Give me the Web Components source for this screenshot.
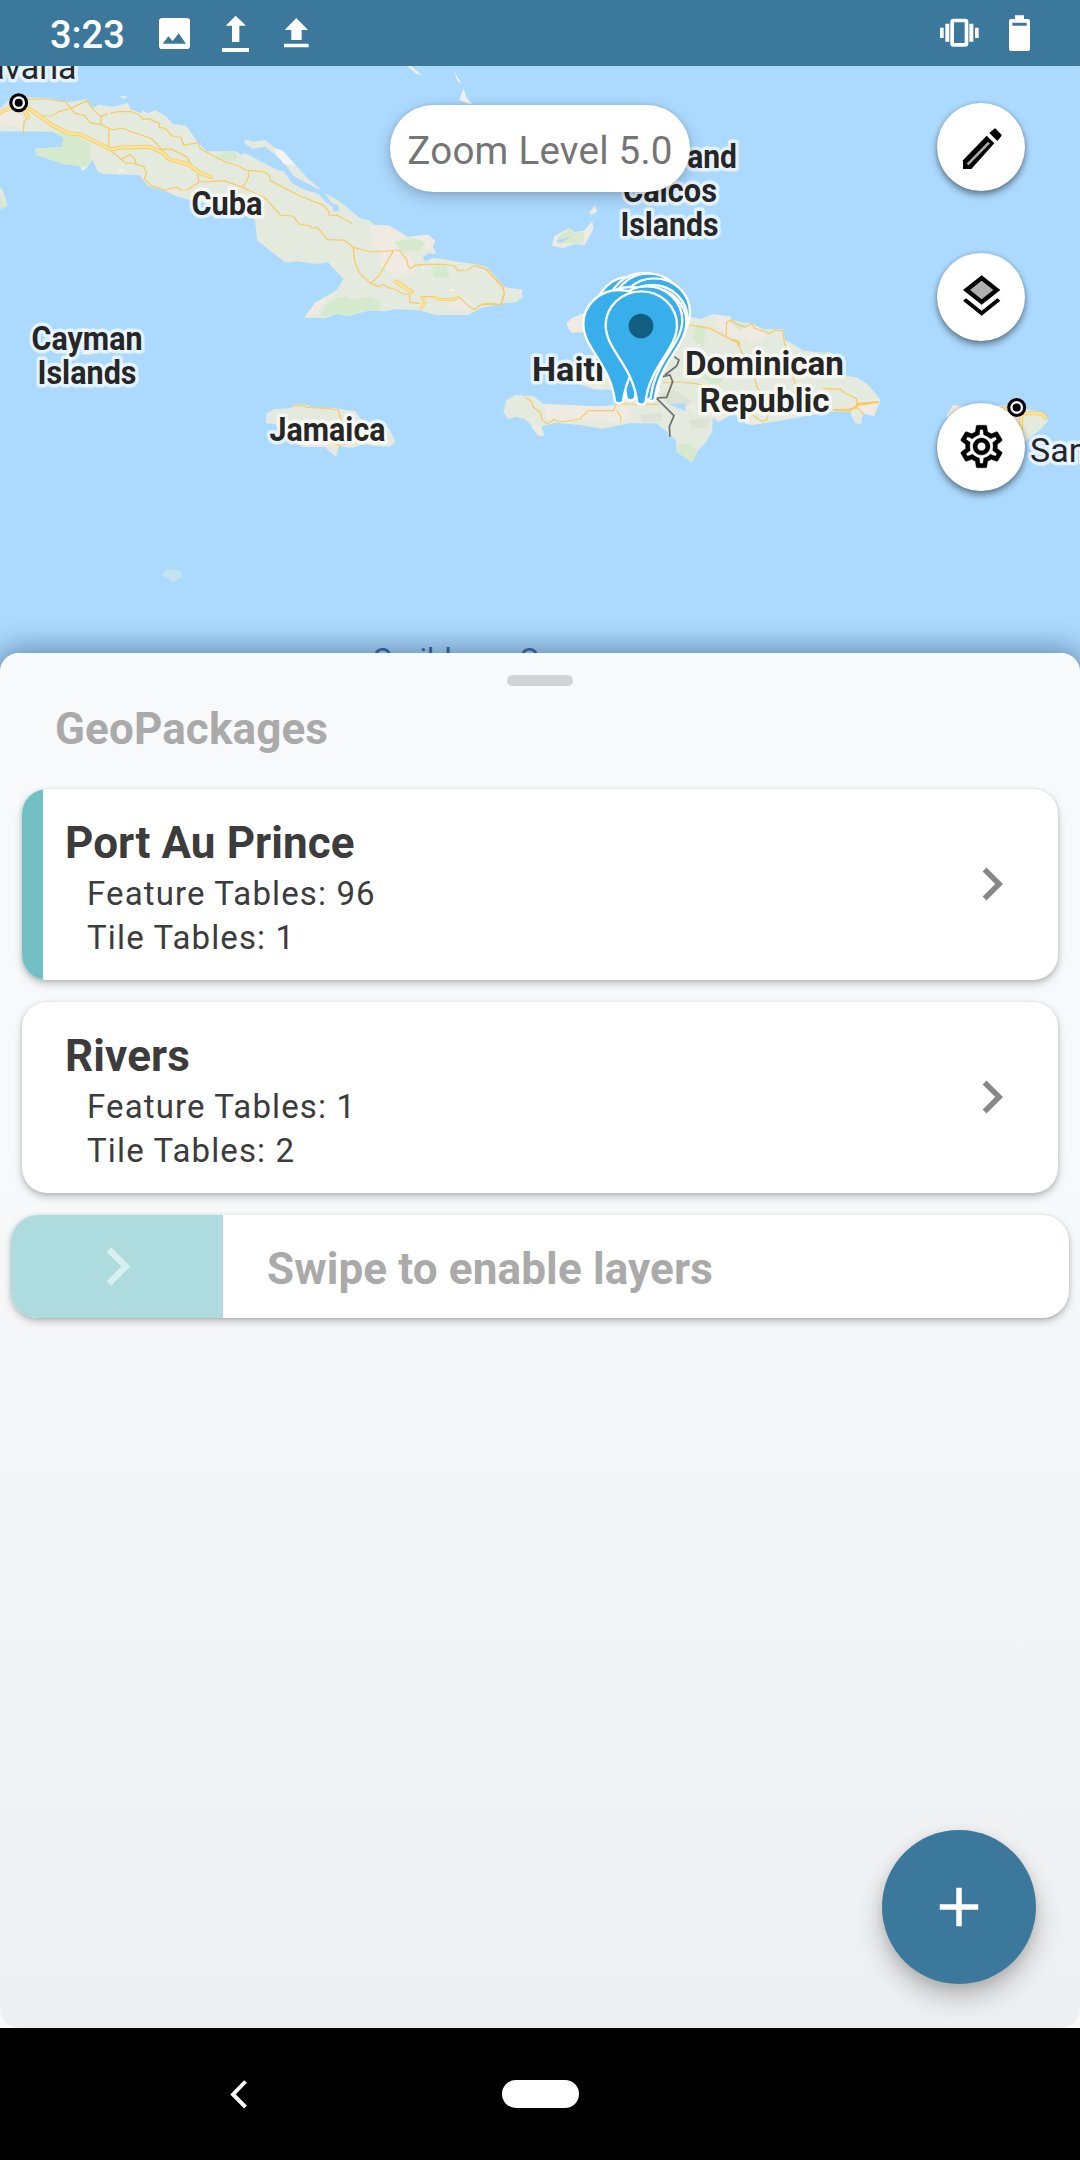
<!DOCTYPE html>
<html lang="en">
<head>
<meta charset="utf-8">
<title>GeoPackage MapCache</title>
<style>
html,body{margin:0;padding:0;background:#000}
body{width:1080px;height:2160px;overflow:hidden;font-family:Roboto,"Noto Sans",sans-serif}
</style>
</head>
<body>
<map-app></map-app>
<script>
const define = (name, html) => customElements.define(name, class extends HTMLElement {
  constructor() {
    super();
    const t = document.createElement('template');
    t.innerHTML = html;
    this.attachShadow({ mode: 'open' }).appendChild(t.content.cloneNode(true));
  }
});

define('status-bar', `
<style>
:host{display:flex;height:66px;flex:none;background:#3c789b;color:#fff;align-items:center;padding:0 50px 0 50px;box-sizing:border-box}
.time{font-size:38px;font-weight:500;line-height:66px;width:109px;letter-spacing:0;padding-top:3px;box-sizing:border-box}
svg{display:block;height:66px;fill:#fff;flex:none}
.left,.right{display:flex}
.left{gap:32px;flex:1}
.left svg:last-child{margin-left:3px}
.right{gap:30px}
</style>
<div class="time">3:23</div>
<div class="left">
<svg width="31" viewBox="477 0 93 198"><path fill-rule="evenodd" d="M487 54h73q10 0 10 10v73q0 10-10 10h-73q-10 0-10-10V64q0-10 10-10zM488 131h70l-22-31-18 23-13-14z"/></svg>
<svg width="27" viewBox="666 0 81 198"><path d="M707 47l31 30h-20v49h-22V77h-19zM666 144h81v12h-81z"/></svg>
<svg width="25" viewBox="852 0 75 198"><path d="M889 54l35 36h-19v30h-31V90h-20zM852 131h74v11h-74z"/></svg>
</div>
<div class="right">
<svg width="39" viewBox="182 0 117 198"><path fill-rule="evenodd" d="M222 56h36q9 0 9 9v66q0 9-9 9h-36q-9 0-9-9V65q0-9 9-9zM224 67v62h32V67zM198 71h12v54h-12zM270 71h12v54h-12zM182 83h11v31h-11zM287 83h11v31h-11z"/></svg>
<svg width="21" viewBox="387 0 63 198"><path fill-rule="evenodd" d="M405 46h27v11h12q6 0 6 6v84q0 6-6 6h-51q-6 0-6-6V63q0-6 6-6h12zM397 68v9h43v-9z"/></svg>
</div>`);

define('zoom-pill', `
<style>
:host{display:flex;align-items:center;justify-content:center;width:300px;height:87px;border-radius:44px;background:#fff;color:#757575;font-size:38.5px;white-space:nowrap;box-shadow:0 5px 16px rgba(0,0,0,.22),0 0 5px rgba(0,0,0,.1)}
span{letter-spacing:.25px;padding-top:3px}
</style><span><slot></slot></span>`);

define('round-button', `
<style>
:host{display:flex;align-items:center;justify-content:center;width:88px;height:88px;border-radius:50%;background:#fff;box-shadow:0 4px 7px rgba(0,0,0,.42),0 0 4px rgba(0,0,0,.16)}
</style><slot></slot>`);

define('map-view', `
<style>
:host{display:block;position:relative;height:620px;flex:none;background:#acdaff;overflow:hidden}
.map{display:block}
.land{fill:#e5eade}.sand{fill:#efeae2}.park{fill:#d5e9cd}.pale{fill:#f3f3f3}.sea{fill:#acdaff}
.road{fill:none;stroke:#f6cb67;stroke-width:3.7;stroke-linejoin:round;stroke-linecap:round}
.hw{fill:none;stroke:#f5cc66;stroke-width:12;stroke-linejoin:round;stroke-linecap:round}
.hw2{fill:none;stroke:#fee498;stroke-width:7;stroke-linejoin:round;stroke-linecap:round}
text{font-family:Roboto,sans-serif;font-size:33px;font-weight:700;fill:#262626;stroke:#fff;stroke-opacity:.68;stroke-width:7px;paint-order:stroke;stroke-linejoin:round}
.city{font-weight:400;font-size:34px}
.water{font-weight:400;font-size:31px;fill:#3c6cb4;stroke:none}
.pin{fill:#38aeea;stroke:#fff;stroke-width:7}
zoom-pill{position:absolute;left:390px;top:39px}
.tools{position:absolute;right:55px;top:36.500px;display:flex;flex-direction:column;gap:62px}
.tools svg{width:51px;height:51px;display:block}
</style>
<svg class="map" width="1080" height="620" viewBox="0 66 1080 620">
<defs>
<path id="pin" class="pin" d="M0-105C60-105 107-58 107-3C107 70 24 118 12 230Q0 240-12 230C-24 118-107 70-107-3C-107-58-60-105 0-105Z"/>
<g id="cap"><circle r="9.5"/><circle r="6.4" fill="#f4f4f4"/><circle r="4"/></g>
</defs>
<g transform="translate(0 60) scale(.34439 .33333)">
<path class="land" d="M0 146L28 118L84 112L150 116L200 126L252 118L270 143L287 134L330 140L372 128L380 148L408 160L415 152L430 160L450 150L480 168L503 192L541 198L560 225L575 248L600 274L686 274L700 285L712 280L760 305L800 328L825 335L848 370L880 388L925 402L945 425L965 440L970 455L985 452L984 438L962 428L945 400L985 424L1010 445L1045 474L1075 482L1085 494L1130 496L1185 530L1245 524L1264 542L1257 560L1268 583L1245 580L1228 590L1235 605L1255 594L1290 598L1345 608L1380 612L1415 622L1465 682L1515 688L1518 710L1500 727L1460 730L1395 745L1360 765L1265 765L1215 750L1140 748L1120 754L1070 752L1010 768L975 762L948 774L883 773L915 728L978 690L997 656L970 628L952 606L920 612L862 604L830 608L747 542L740 478L650 440L560 422L515 410L480 393L430 378L405 345L300 342L284 334L268 300L255 318L240 332L230 318L185 312L105 284L102 266L180 260L185 235L155 215L0 214Z"/>
<path class="land" d="M710 238L735 245L770 240L800 265L850 305L893 355L935 392L880 364L855 350L825 310L800 285L770 260L735 267L710 250ZM345 109L371 108L362 117ZM0 380L10 395L21 438L0 448Z"/>
<path class="pale" d="M797 264L822 272L860 318L848 316L825 312L804 286ZM884 356L935 392L905 372ZM1183 18L1194 18L1226 48L1207 40ZM1319 36L1342 74L1328 62ZM1346 85L1354 112L1372 134L1334 121ZM345 326L370 332L345 335ZM1240 548L1248 560L1232 568ZM235 328L255 318L245 330ZM1226 620L1240 624L1226 628ZM1306 686L1326 692L1310 695Z"/>
<path class="sand" d="M0 165L25 150L70 165L64 200L20 196L0 190ZM1075 496L1125 498L1175 530L1145 545L1160 570L1200 600L1205 640L1150 655L1100 610L1110 575L1080 555ZM1190 530L1245 524L1262 545L1250 570L1225 550ZM1300 735L1345 712L1380 735L1355 755ZM888 770L915 728L960 705L920 760Z"/>
<path class="park" d="M102 266L180 260L185 235L160 218L200 216L262 252L264 296L250 322L230 318L185 312L105 284ZM624 298L650 275L686 276L690 292L680 304ZM930 768L945 735L985 712L1010 710L1022 720L1070 710L1104 725L1102 750L1060 752L1010 766L975 762ZM1255 620L1295 618L1307 652L1260 652ZM1145 545L1200 535L1235 545L1220 570L1165 572ZM0 400L18 440L0 448Z"/>
<path class="road" d="M76 118L130 117L190 125L206 145L252 122L270 148L293 170L293 194L328 210L352 204L440 236L470 268L500 268L545 292L552 310M293 170L312 161M320 160L345 154L380 155L405 165L415 178L430 176L464 190L462 202L480 205L500 228L525 232L534 256L575 248L582 266L650 304L692 318L712 330L765 335L782 345L785 362L865 405L940 436L955 455L955 465L982 467L1020 489M206 145L218 160L245 167L262 188L293 194M206 145L170 155L148 168L120 168M316 208L316 262L322 272L352 298L378 284L392 298L395 312L418 320L425 340L420 355L438 376L478 390L515 381L525 390L545 390L578 366L605 365L650 362L705 382L770 414L815 466L852 468L868 492L900 498L906 504L922 503L950 538L1000 541L1026 562L1078 576L1143 572L1100 648L1076 670L1045 640L1030 605L1026 562M352 298L362 308L395 312M578 366L574 344M722 330L722 350L705 382M1076 670L1100 680L1115 674L1125 682L1143 687M1148 688L1170 702L1190 703L1190 727L1218 730M1148 570L1160 572L1182 600L1184 617L1192 626L1205 616L1235 613L1290 613L1320 618L1328 632L1358 630L1378 616L1412 627L1460 680L1465 700L1455 735L1430 730L1400 732L1378 748L1365 742L1335 712M1230 710L1260 710M68 215L70 185L78 172"/>
<path class="hw" d="M0 158L50 132M80 142L150 195L200 220L235 224L322 268L350 263L430 260L470 276L492 298L545 312L580 338L612 351M1150 665L1195 695M70 150L82 172"/>
<path class="hw2" d="M0 158L50 132M80 142L150 195L200 220L235 224L322 268L350 263L430 260L470 276L492 298L545 312L580 338L612 351M1150 665L1195 695M70 150L82 172"/>
<path class="hw" style="stroke-width:9" d="M1262 712L1275 718L1315 719L1330 712M1225 712L1235 726L1222 745"/>
<path class="hw2" style="stroke-width:5" d="M1262 712L1275 718L1315 719L1330 712M1225 712L1235 726L1222 745"/>
</g>
<g transform="translate(480 60) scale(.33333)">
<path class="sand" d="M216 557L223 528L268 504L285 516L312 512L337 484L340 507L314 555L285 552L250 564ZM330 455L344 437L353 455L332 465Z"/>
<path class="park" d="M232 530L268 506L284 518L312 515L310 550L232 550Z"/><path class="sea" d="M230 541L275 530L238 550Z"/>
</g>
<g transform="translate(480 260) scale(.33333)">
<path class="land" d="M260 190L275 175L310 160L420 140L600 172L632 170L660 178L700 162L740 168L755 180L790 188L815 190L850 208L910 208L915 240L935 250L970 272L1040 280L1080 345L1130 352L1165 375L1202 420L1183 468L1150 460L1143 492L1125 490L1110 455L1050 455L900 482L860 488L815 494L780 475L760 460L715 485L698 472L697 515L675 550L655 570L635 607L590 575L588 540L560 515L530 490L450 490L365 506L300 495L225 488L183 500L195 527L175 527L168 508L135 478L110 470L85 478L70 455L80 420L105 405L160 408L190 432L270 435L345 440L400 435L425 428L400 390L340 388L270 362L280 340L390 340L340 215L275 218L265 205Z"/>
<path class="sand" d="M260 190L275 175L320 158L330 214L275 218L265 205ZM190 433L320 438L440 440L470 470L410 488L340 476L230 485L200 480ZM270 363L380 380L365 390ZM700 170L750 168L755 190L850 212L860 230L820 250L780 230L730 220ZM700 455L760 460L715 485ZM800 480L860 488L815 494L795 492ZM1110 430L1195 415L1180 468L1150 460L1120 450ZM620 440L640 430L655 460ZM150 495L180 505L190 525L175 527Z"/>
<path class="park" d="M590 575L592 555L625 550L655 570L635 607ZM665 350L710 330L730 365L690 375ZM1010 280L1050 275L1080 300L1020 300ZM750 185L800 195L780 212ZM650 190L680 200L670 260L640 240Z"/>
<path fill="#dce2d4" d="M480 465L548 458L545 482L485 487ZM540 400L580 390L635 420L625 430L560 430ZM630 480L690 475L685 505L635 505Z"/>
<path class="sea" d="M564 432L620 430L614 445L622 455Z"/>
<path class="road" d="M0 22L18 27L66 80L73 100L62 132L0 135M135 412L155 424L160 442L182 458L186 480L203 492L222 478L240 486L300 477L325 452L400 452L410 430L440 432L535 433M410 450L422 470L422 483M600 190L690 205L740 232L770 245L790 285L800 310L815 310L830 380L840 395M738 230L740 186L752 182L795 202L815 190L825 205L870 220L885 210L908 212L912 240L925 300L945 370L940 400M550 368L600 366L640 370L690 378M1030 385L1080 388L1100 402L1130 415L1130 445L1060 450M1130 430L1195 425M1130 440L1150 462M810 460L845 484L860 480L870 450"/>
<path fill="none" stroke="#f6cb67" stroke-width="6" d="M755 240L775 245L778 256M1060 450L1110 452L1132 435L1195 426"/>
<path fill="none" stroke="#6e6e6e" stroke-width="5" d="M583 290L597 300L590 318L555 345M530 414L560 412L578 365L570 345L548 350M530 415L582 467L568 500L570 530"/>
</g>
<g transform="translate(0 300) scale(.34439 .33333)">
<path class="land" d="M773 342L795 327L845 325L850 314L885 313L900 320L975 325L1032 334L1050 360L1130 385L1148 425L1132 440L1085 438L1060 432L1022 444L985 438L976 470L942 440L880 440L850 425L815 400L800 372L773 370ZM225 162L262 152L280 158L262 165Z"/>
<path class="sand" d="M860 425L940 425L1020 440L985 438L942 440L880 440Z"/>
<path class="road" d="M848 318L885 316L890 322L950 325L982 330L992 365L985 390M950 425L985 436L1020 428"/>
<path fill="#c5e3ee" d="M471 824L485 806L528 814L528 832L502 846Z"/>
</g>
<g transform="translate(880 0) scale(.33333)">
<path class="land" d="M200 1245L220 1215L250 1220L370 1215L445 1228L480 1236L505 1262L480 1290L435 1325L300 1325L210 1300ZM0 1195L3 1198L0 1202Z"/><path class="sand" d="M198 1250L220 1215L245 1218L220 1240Z"/>
<path class="hw" d="M370 1224L400 1232L430 1240L485 1240L496 1252M425 1245L422 1290"/><path class="hw2" d="M370 1224L400 1232L430 1240L485 1240L496 1252M425 1245L422 1290"/>
</g>
<text class="city" x="76.500" y="79" text-anchor="end">Havana</text>
<text x="191.500" y="215" textLength="71" lengthAdjust="spacingAndGlyphs">Cuba</text>
<text x="31.500" y="349.500" textLength="111" lengthAdjust="spacingAndGlyphs">Cayman</text>
<text x="37.500" y="383.500" textLength="99" lengthAdjust="spacingAndGlyphs">Islands</text>
<text x="269.500" y="441" textLength="116" lengthAdjust="spacingAndGlyphs">Jamaica</text>
<text x="532" y="380.500" textLength="72" lengthAdjust="spacingAndGlyphs">Haiti</text>
<text x="685" y="375" textLength="159" lengthAdjust="spacingAndGlyphs">Dominican</text>
<text x="699.500" y="411.700" textLength="130" lengthAdjust="spacingAndGlyphs">Republic</text>
<text x="603" y="168" textLength="134" lengthAdjust="spacingAndGlyphs">Turks and</text>
<text x="623" y="202" textLength="94" lengthAdjust="spacingAndGlyphs">Caicos</text>
<text x="620.500" y="236" textLength="98" lengthAdjust="spacingAndGlyphs">Islands</text>
<text class="city" x="1030" y="461.500">San Juan</text>
<text class="water" x="372" y="669.500">Caribbean Sea</text>
<use href="#cap" x="18.700" y="102.700"/><use href="#cap" x="1016.700" y="407.500"/>
<g transform="translate(480 260) scale(.33333)">
<use href="#pin" x="455" y="154"/><use href="#pin" x="492" y="144"/><use href="#pin" x="505" y="146"/><use href="#pin" x="523" y="160"/><use href="#pin" x="452" y="186"/><use href="#pin" x="516" y="180"/><use href="#pin" x="512" y="189"/><use href="#pin" x="500" y="184"/><use href="#pin" x="417" y="195"/><use href="#pin" x="484" y="199"/>
<circle cx="483" cy="198" r="37" fill="#125e82"/>
</g>
</svg>
<zoom-pill>Zoom Level 5.0</zoom-pill>
<div class="tools">
<round-button><svg viewBox="226 363 153 153"><path d="M318 407L341 430L272 507H247V481Z"/><path stroke="#aaa" stroke-width="8" d="M261 493L325 428"/><path stroke="#000" stroke-width="4" stroke-linejoin="round" d="M343 387L361 406L350 420L329 399Z"/></svg></round-button>
<round-button><svg viewBox="226 813 153 153"><path d="M303 826L359 870L303 914L247 870Z"/><path fill="#b0b0b0" d="M303 842L338 870L303 898L268 870Z"/><path d="M247 902L256 895L303 932L350 895L359 902L303 947Z"/></svg></round-button>
<round-button><svg viewBox="0 0 24 24"><path stroke="#000" stroke-width=".2" d="M19.430 12.980c.04-.32.07-.64.07-.98 0-.34-.03-.66-.07-.98l2.110-1.650c.19-.15.24-.42.12-.64l-2-3.460c-.09-.16-.26-.25-.44-.25-.06 0-.12.01-.17.03l-2.490 1c-.52-.4-1.080-.73-1.690-.98l-.38-2.650C14.460 2.180 14.250 2 14 2h-4c-.25 0-.46.18-.49.42l-.38 2.650c-.61.25-1.170.59-1.690.98l-2.490-1c-.06-.02-.12-.03-.18-.03-.17 0-.34.09-.43.25l-2 3.460c-.13.22-.07.49.12.64l2.110 1.650c-.04.32-.07.65-.07.98 0 .33.03.66.07.98l-2.110 1.650c-.19.15-.24.42-.12.64l2 3.460c.09.16.26.25.44.25.06 0 .12-.01.17-.03l2.490-1c.52.4 1.080.73 1.690.98l.38 2.650c.03.24.24.42.49.42h4c.25 0 .46-.18.49-.42l.38-2.650c.61-.25 1.170-.59 1.690-.98l2.490 1c.06.02.12.03.18.03.17 0 .34-.09.43-.25l2-3.460c.12-.22.07-.49-.12-.64l-2.110-1.650zm-1.980-1.710c.04.31.05.52.05.73 0 .21-.02.43-.05.73l-.14 1.130.89.7 1.080.84-.7 1.210-1.270-.51-1.040-.42-.9.68c-.43.32-.84.56-1.250.73l-1.060.43-.16 1.130-.2 1.350h-1.400l-.19-1.350-.16-1.130-1.060-.43c-.43-.18-.83-.41-1.230-.71l-.91-.7-1.060.43-1.270.51-.7-1.210 1.080-.84.89-.7-.14-1.130c-.03-.31-.05-.54-.05-.74s.02-.43.05-.73l.14-1.130-.89-.7-1.080-.84.7-1.210 1.270.51 1.040.42.9-.68c.43-.32.84-.56 1.250-.73l1.060-.43.16-1.130.2-1.350h1.390l.19 1.350.16 1.130 1.060.43c.43.18.83.41 1.230.71l.91.7 1.060-.43 1.270-.51.7 1.210-1.070.85-.89.7.14 1.130zM12 8c-2.210 0-4 1.790-4 4s1.790 4 4 4 4-1.790 4-4-1.790-4-4-4zm0 6c-1.100 0-2-.9-2-2s.9-2 2-2 2 .9 2 2-.9 2-2 2z"/></svg></round-button>
</div>`);

define('geo-card', `
<style>
:host{display:flex;align-items:stretch;height:191px;margin:0 22px;border-radius:25px;background:#fff;color:#3c3c3c;overflow:hidden;box-shadow:0 4px 8px rgba(0,0,0,.2),0 1px 4px rgba(0,0,0,.14)}
.stripe{width:21px;flex:none}
:host([active]) .stripe{background:#73c0c4}
.body{flex:1;padding:28px 0 0 22px}
.title{font-size:44px;font-weight:700;line-height:52px;letter-spacing:.1px;white-space:nowrap;margin-bottom:3px}
.info{font-size:33px;line-height:44px;letter-spacing:1.130px;padding-left:22px;white-space:nowrap}
svg{width:66px;height:66px;margin:62px 33px 0 0;fill:#888}
</style>
<div class="stripe"></div>
<div class="body"><div class="title"><slot></slot></div><div class="info"><slot name="features"></slot></div><div class="info"><slot name="tiles"></slot></div></div>
<svg viewBox="0 0 24 24"><path d="M10 6L8.590 7.410 13.170 12l-4.580 4.590L10 18l6-6z"/></svg>`);

define('swipe-row', `
<style>
:host{display:flex;height:103px;margin:0 11px;border-radius:27px;background:#fff;overflow:hidden;box-shadow:0 4px 8px rgba(0,0,0,.2),0 1px 4px rgba(0,0,0,.14)}
.thumb{width:212px;background:#aedbde;display:flex;align-items:center;justify-content:center}
svg{width:77px;height:77px;fill:#daeff0}
.label{font-size:44px;font-weight:700;color:#aaa;padding-left:44px;line-height:108px;letter-spacing:.14px;white-space:nowrap}
</style>
<div class="thumb"><svg viewBox="0 0 24 24"><path d="M10 6L8.590 7.410 13.170 12l-4.580 4.590L10 18l6-6z"/></svg></div>
<div class="label"><slot></slot></div>`);

define('add-button', `
<style>
:host{display:flex;align-items:center;justify-content:center;width:154px;height:154px;border-radius:50%;background:#3c789b;box-shadow:0 14px 26px rgba(0,0,0,.22),0 4px 12px rgba(0,0,0,.1)}
svg{width:66px;height:66px;fill:#fff}
</style><svg viewBox="0 0 24 24"><path d="M19 13h-6v6h-2v-6H5v-2h6V5h2v6h6v2z"/></svg>`);

define('bottom-sheet', `
<style>
:host{display:block;position:relative;height:1375px;margin-top:-33px;flex:none;border-radius:19px 19px 0 0;overflow:visible;background:#fafafa;box-shadow:0 0 28px 6px rgba(0,20,50,.38)}
.panel{display:flex;flex-direction:column;height:100%;box-sizing:border-box;border-radius:19px;background:linear-gradient(#f8f9fb 0%,#f8f9fb 35%,#eeeff1 100%)}
.handle{width:66px;height:11px;border-radius:6px;background:#d3d3d3;margin:22px auto 0;flex:none}
h1{margin:15px 0 0 55px;font-size:44px;line-height:56px;height:88px;color:#aaa;font-weight:700;letter-spacing:.12px}
.list{display:flex;flex-direction:column;gap:22px}
.foot{flex:1;display:flex;justify-content:flex-end;align-items:flex-end;padding:0 44px 44px 0}
</style>
<div class="panel">
<div class="handle"></div>
<h1>GeoPackages</h1>
<div class="list">
<geo-card active>Port Au Prince<span slot="features">Feature Tables: 96</span><span slot="tiles">Tile Tables: 1</span></geo-card>
<geo-card>Rivers<span slot="features">Feature Tables: 1</span><span slot="tiles">Tile Tables: 2</span></geo-card>
<swipe-row>Swipe to enable layers</swipe-row>
</div>
<div class="foot"><add-button></add-button></div>
</div>`);

define('nav-bar', `
<style>
:host{display:flex;height:132px;flex:none;background:#000;align-items:center;position:relative}
svg{display:block;margin-left:230px;width:18px;height:30px}
.home{width:77px;height:28px;border-radius:14px;background:#fff;margin-left:254px}
</style>
<svg viewBox="0 0 18 30"><path d="M15.500 2.500L3 15.500L15.500 28" fill="none" stroke="#fff" stroke-width="3.900"/></svg>
<div class="home"></div>`);

define('map-app', `
<style>
:host{display:flex;flex-direction:column;width:1080px;height:2160px;overflow:hidden}
</style>
<status-bar></status-bar><map-view></map-view><bottom-sheet></bottom-sheet><nav-bar></nav-bar>`);
</script>
</body>
</html>
